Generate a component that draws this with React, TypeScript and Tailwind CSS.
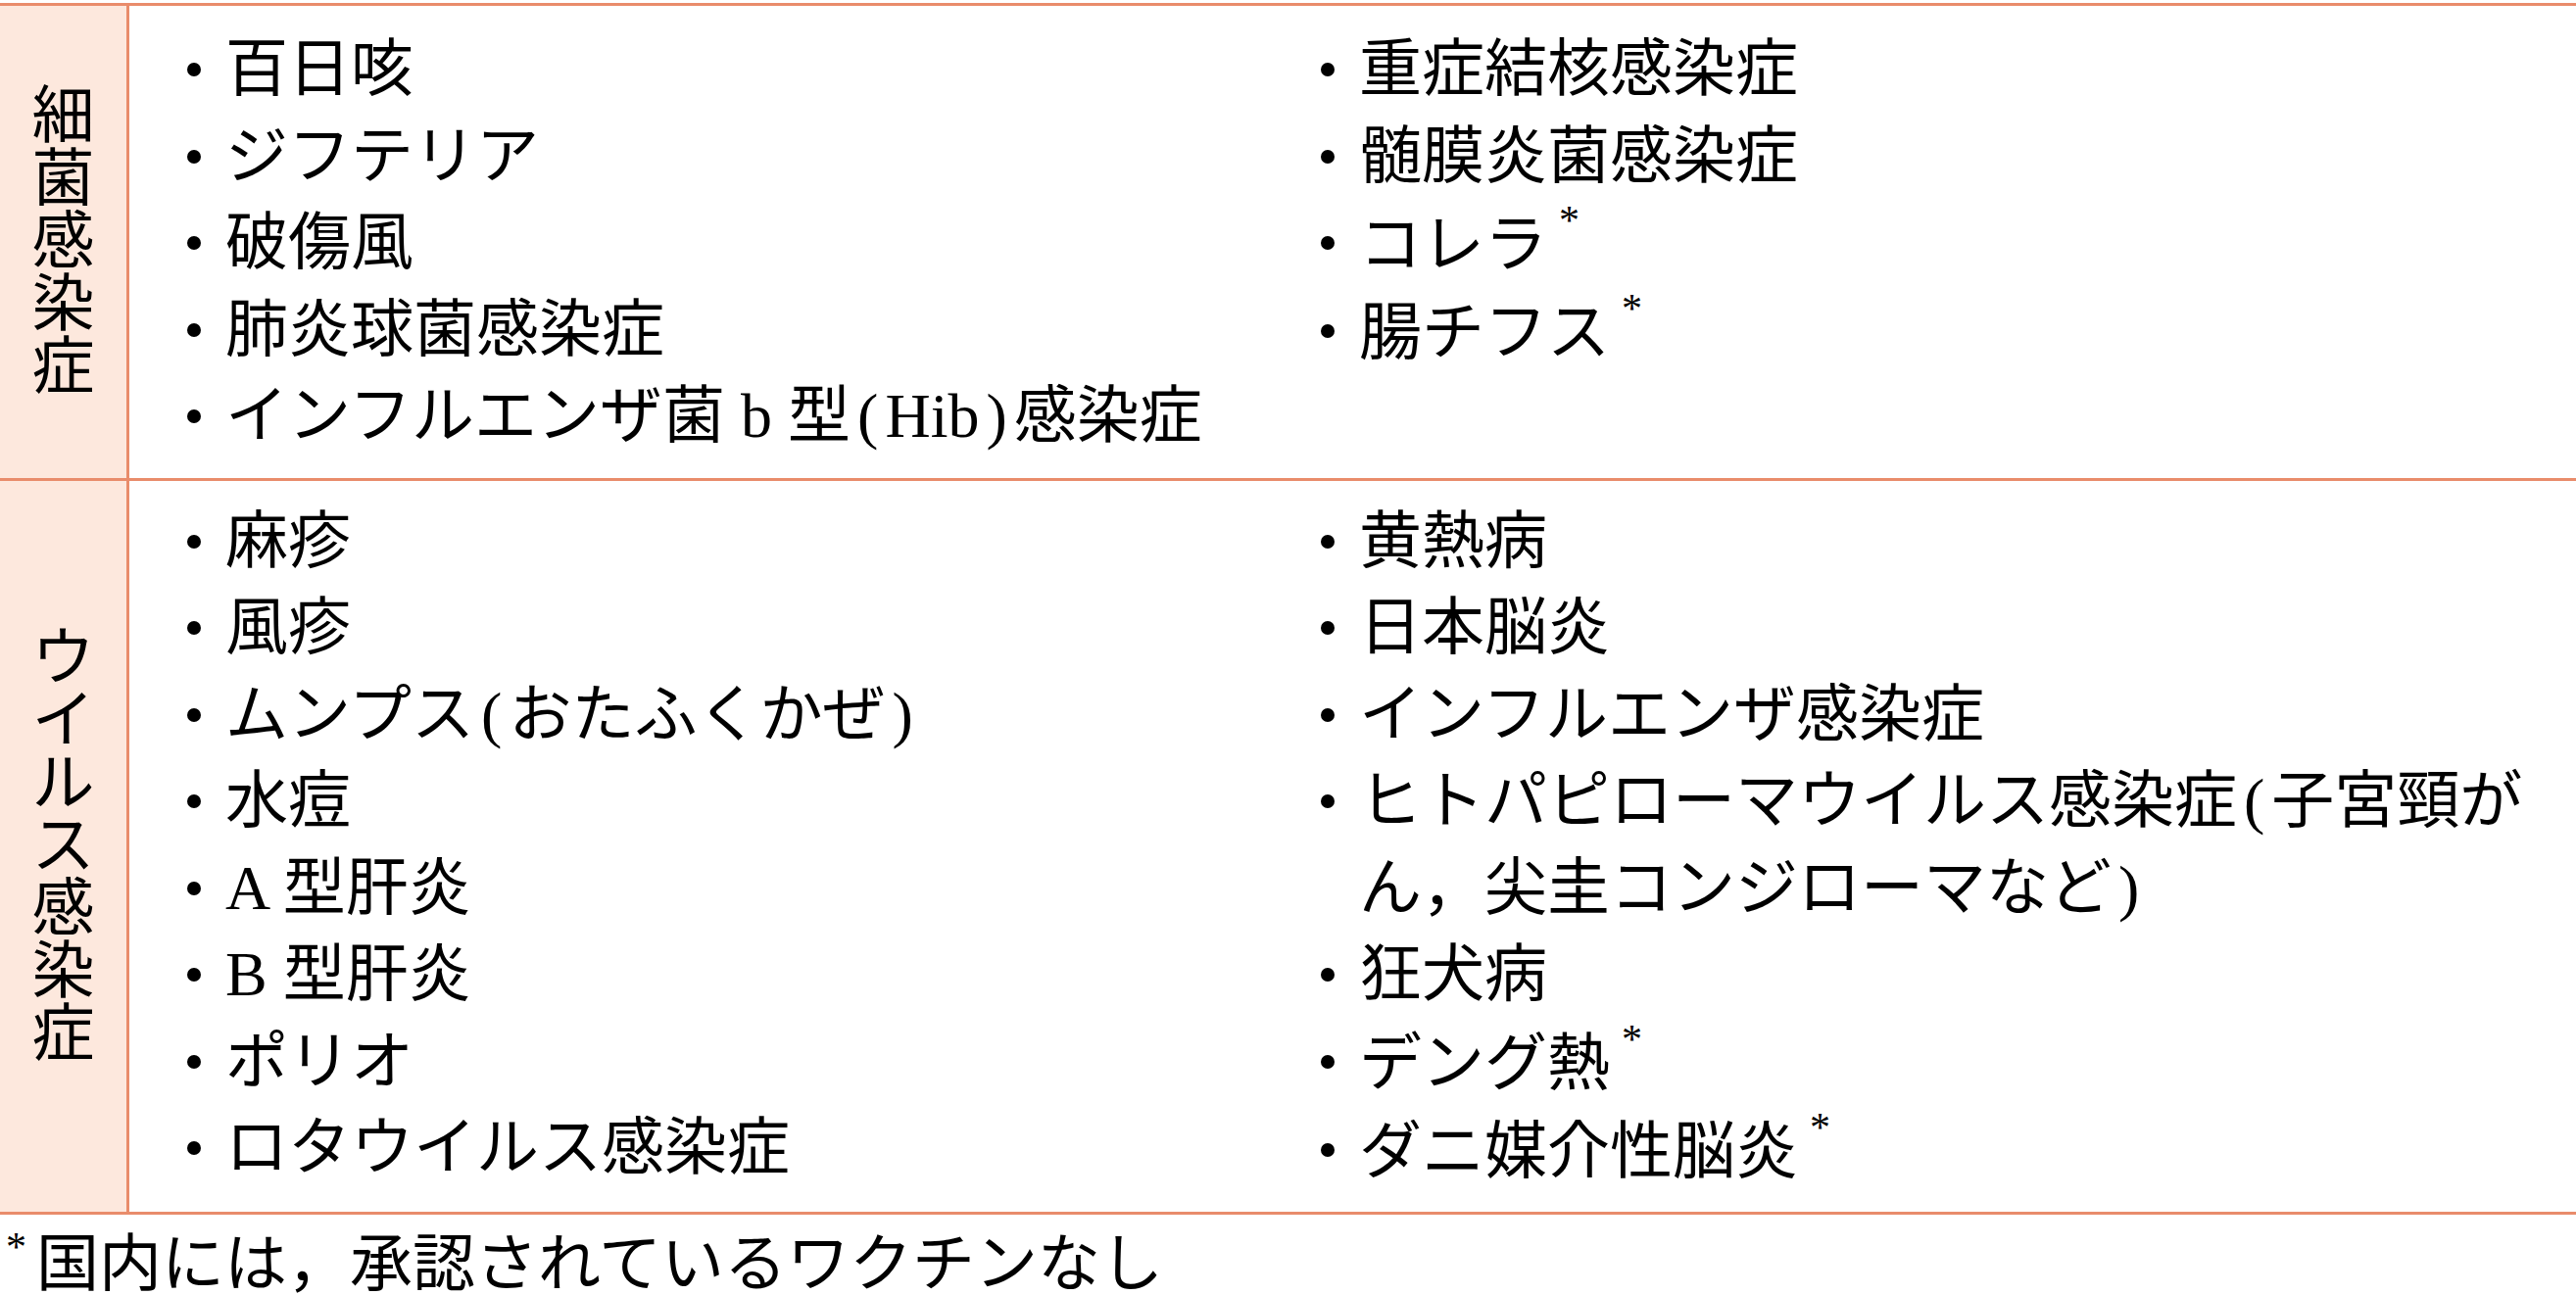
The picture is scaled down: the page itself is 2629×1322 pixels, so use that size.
import React from 'react'

type Item = { text: React.ReactNode; cont?: React.ReactNode }

const Star = () => (
  <span className="ml-[12px] text-[42px] leading-none align-[0.75em]">*</span>
)

// narrow parens with a bit of air, as in the printed table
const L = () => <span className="px-[7px]">(</span>
const R = () => <span className="px-[7px]">)</span>

const bacteriaLeft: Item[] = [
  { text: '百日咳' },
  { text: 'ジフテリア' },
  { text: '破傷風' },
  { text: '肺炎球菌感染症' },
  { text: <>インフルエンザ菌 b 型<L />Hib<R />感染症</> },
]

const bacteriaRight: Item[] = [
  { text: '重症結核感染症' },
  { text: '髄膜炎菌感染症' },
  { text: <>コレラ<Star /></> },
  { text: <>腸チフス<Star /></> },
]

const virusLeft: Item[] = [
  { text: '麻疹' },
  { text: '風疹' },
  { text: <>ムンプス<L />おたふくかぜ<R /></> },
  { text: '水痘' },
  { text: 'A 型肝炎' },
  { text: 'B 型肝炎' },
  { text: 'ポリオ' },
  { text: 'ロタウイルス感染症' },
]

const virusRight: Item[] = [
  { text: '黄熱病' },
  { text: '日本脳炎' },
  { text: 'インフルエンザ感染症' },
  { text: <>ヒトパピローマウイルス感染症<L />子宮頸が</>, cont: <>ん，尖圭コンジローマなど<R /></> },
  { text: '狂犬病' },
  { text: <>デング熱<Star /></> },
  { text: <>ダニ媒介性脳炎<Star /></> },
]

function Bullet({ item }: { item: Item }): React.ReactElement {
  return (
    <li className="flex">
      <span className="w-16 h-[88.5px] shrink-0 flex items-center justify-center">
        <span className="w-[14px] h-[14px] rounded-full bg-black" />
      </span>
      <span className="whitespace-nowrap">
        {item.text}
        {item.cont && (
          <>
            <br />
            {item.cont}
          </>
        )}
      </span>
    </li>
  )
}

function Heading({ chars }: { chars: string }): React.ReactElement {
  return (
    <div className="w-[132px] shrink-0 bg-[#fde8dd] border-r-[3px] border-[#e98c6b] flex flex-col items-center justify-center">
      {chars.split('').map((c, i) => (
        <span key={i} className="h-16 leading-[64px]">{c}</span>
      ))}
    </div>
  )
}

function Row({ label, left, right, pad, last }: {
  label: string; left: Item[]; right: Item[]; pad: string; last?: boolean
}): React.ReactElement {
  return (
    <div className={`flex ${last ? '' : 'border-b-[3px] border-[#e98c6b]'}`}>
      <Heading chars={label} />
      <div className={`flex-1 grid grid-cols-[1157px_1fr] pl-[34px] ${pad}`}>
        <ul>{left.map((it, i) => <Bullet key={i} item={it} />)}</ul>
        <ul>{right.map((it, i) => <Bullet key={i} item={it} />)}</ul>
      </div>
    </div>
  )
}

export default function App(): React.ReactElement {
  return (
    <div className="w-[2629px] h-[1322px] overflow-hidden bg-white text-black text-[64px] leading-[88.5px] font-['Liberation_Serif','Noto_Sans_CJK_JP',serif] pt-[3px]">
      <div className="border-y-[3px] border-[#e98c6b]">
        <Row label="細菌感染症" left={bacteriaLeft} right={bacteriaRight} pad="pt-[21px] pb-[18px]" />
        <Row label="ウイルス感染症" left={virusLeft} right={virusRight} pad="pt-[18px] pb-[17px]" last />
      </div>
      <p className="mt-[12px] pl-[6px] leading-[64px] whitespace-nowrap">
        <span className="text-[42px] leading-none align-[0.6em] mr-[10px]">*</span>
        国内には，承認されているワクチンなし
      </p>
    </div>
  )
}
